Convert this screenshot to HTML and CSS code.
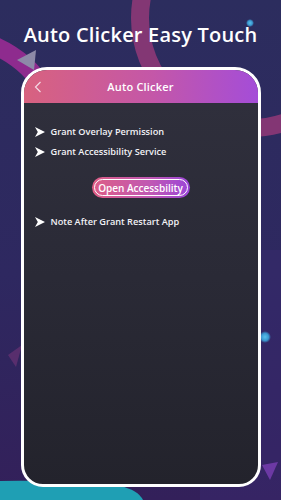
FILE: index.html
```html
<!DOCTYPE html>
<html>
<head>
<meta charset="utf-8">
<link rel="stylesheet" href="styles.css">
</head>
<body>
<div class="screen">
  <svg class="bg" width="281" height="500" viewBox="0 0 281 500">
    <defs>
      <linearGradient id="bgg" x1="0" y1="0" x2="0" y2="1">
        <stop offset="0" stop-color="#2c2d5e"/>
        <stop offset="0.55" stop-color="#2e2860"/>
        <stop offset="1" stop-color="#33205a"/>
      </linearGradient>
      <radialGradient id="dot" cx="0.5" cy="0.5" r="0.5">
        <stop offset="0" stop-color="#5cc0ea"/>
        <stop offset="0.6" stop-color="#3a97cf"/>
        <stop offset="1" stop-color="#3a97cf" stop-opacity="0"/>
      </radialGradient>
    </defs>
    <rect width="281" height="500" fill="url(#bgg)"/>
    <rect x="200" y="250" width="81" height="250" fill="#3a2a70" opacity="0.45"/>
    <circle cx="250" cy="18" r="110" fill="none" stroke="#a83c7e" stroke-opacity="0.7" stroke-width="18"/>
    <path d="M-20 40 Q 25 55 45 90" fill="none" stroke="#8e2b8e" stroke-width="18"/>
    <polygon points="17,60 36,50 34,70" fill="#8d8aa8"/>
    <circle cx="250" cy="23" r="4" fill="url(#dot)"/>
    <circle cx="265" cy="337" r="6" fill="url(#dot)"/>
    <polygon points="262,465 278,462 270,480" fill="#7a3fb4" opacity="0.8"/>
    <polygon points="8,355 22,345 16,367" fill="#8a3a80" opacity="0.45"/>
    <path d="M0 481 Q 70 480 120 486 Q 138 490 143 500 L0 500 Z" fill="#1f9fb4"/>
  </svg>

  <h1 class="title">Auto Clicker Easy Touch</h1>

  <div class="phone">
    <div class="header">
      <svg class="back" width="8" height="12" viewBox="0 0 8 12"><path d="M6.5 1 L1.5 6 L6.5 11" fill="none" stroke="#f4d9e4" stroke-width="1.2"/></svg>
      <span class="header-title">Auto Clicker</span>
    </div>
    <div class="body">
      <ul class="steps">
        <li class="step"><svg class="arrow" width="10" height="10" viewBox="0 0 10 10"><path d="M0 0 L10 5 L0 10 L2.8 5 Z" fill="#fff"/></svg><span>Grant Overlay Permission</span></li>
        <li class="step"><svg class="arrow" width="10" height="10" viewBox="0 0 10 10"><path d="M0 0 L10 5 L0 10 L2.8 5 Z" fill="#fff"/></svg><span>Grant Accessibility Service</span></li>
      </ul>
      <div class="btn-row">
        <button class="btn"><span class="btn-inner">Open Accessbility</span></button>
      </div>
      <ul class="steps">
        <li class="step"><svg class="arrow" width="10" height="10" viewBox="0 0 10 10"><path d="M0 0 L10 5 L0 10 L2.8 5 Z" fill="#fff"/></svg><span>Note After Grant Restart App</span></li>
      </ul>
    </div>
  </div>
</div>
</body>
</html>
```

FILE: styles.css
```css
* { box-sizing: border-box; }
html, body { margin: 0; padding: 0; }
body { width: 281px; height: 500px; overflow: hidden; font-family: "Open Sans", "DejaVu Sans", sans-serif; }
.screen { position: relative; width: 281px; height: 500px; overflow: hidden; display: flex; flex-direction: column; align-items: center; }
.bg { position: absolute; left: 0; top: 0; z-index: 0; }
.title { position: relative; z-index: 1; margin: 22px 0 0; font-size: 20px; line-height: 26px; font-weight: 600; color: #fff; letter-spacing: 0.2px; white-space: nowrap; }
.phone { position: relative; z-index: 1; margin-top: 19px; width: 240px; height: 420px; border: 3px solid #fff; border-radius: 26px 26px 22px 22px; overflow: hidden; display: flex; flex-direction: column; background: linear-gradient(180deg, #30303d 0%, #2a2a36 50%, #23232c 100%); }
.header { height: 33px; flex: none; display: flex; align-items: center; justify-content: center; position: relative; background: linear-gradient(90deg, #d8627f 0%, #c457a8 55%, #a44dd8 100%); }
.back { position: absolute; left: 10px; top: 11px; }
.header-title { color: #fff; font-size: 11px; font-weight: 600; letter-spacing: 0.2px; }
.body { padding: 23px 0 0 11px; }
.steps { list-style: none; margin: 0; padding: 0; display: flex; flex-direction: column; gap: 9px; }
.step { display: flex; align-items: center; gap: 6px; color: #f2f2f6; font-size: 9.2px; line-height: 11px; font-weight: 600; }
.arrow { flex: none; }
.btn-row { display: flex; justify-content: center; margin: 20px 0 18px; padding-right: 11px; }
.btn { border: none; padding: 2px; border-radius: 12px; width: 98px; height: 21px; background: linear-gradient(90deg, #dd5d85 0%, #c058b4 60%, #9a45d8 100%); font-family: inherit; cursor: pointer; display: flex; }
.btn-inner { flex: 1; border: 1px solid #fff; border-radius: 10px; color: #fff; font-size: 10px; font-weight: 600; display: flex; align-items: center; justify-content: center; }
```
